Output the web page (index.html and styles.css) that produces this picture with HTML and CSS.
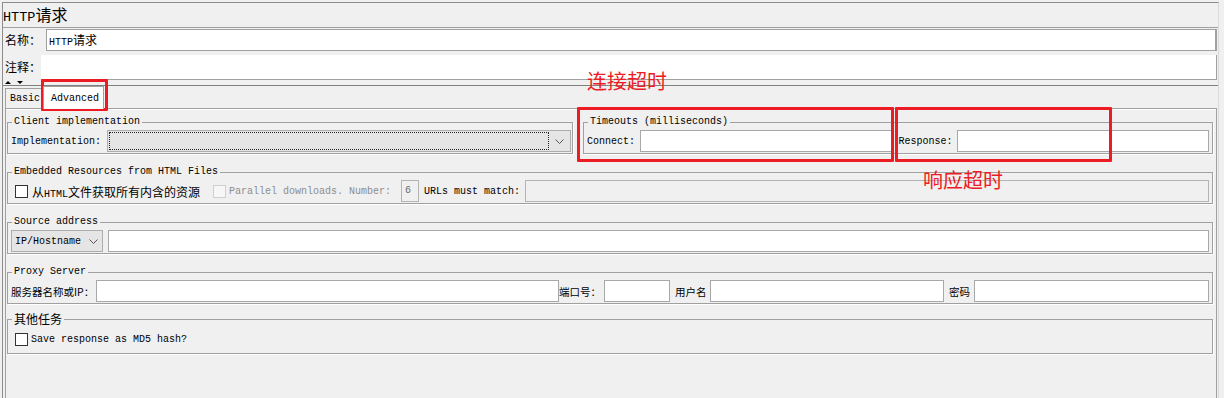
FILE: index.html
```html
<!DOCTYPE html>
<html lang="zh-CN">
<head>
  <meta charset="UTF-8" />
  <meta name="viewport" content="width=device-width, initial-scale=1.0"/>
  <title>HTTP请求 - Advanced</title>
  <link rel="stylesheet" href="styles.css">
</head>
<body>
  <div class="page">
    <div class="title"><span class="en">HTTP</span>请求</div>

    <div class="info">
      <div class="info-row">
        <label class="info-label name-label cn">名称：</label>
        <div class="name-field cn"><span class="en">HTTP</span>请求</div>
      </div>
      <div class="info-row">
        <label class="info-label comment-label cn">注释：</label>
        <div class="comment-area"></div>
      </div>
    </div>

    <div class="splitter">
      <svg width="20" height="5" viewBox="0 0 20 5">
        <polygon points="0,4 3,1 6,4" fill="#000"/>
        <polygon points="12,1 18,1 15,4" fill="#000"/>
      </svg>
    </div>

    <div class="tabs">
      <div class="tab">Basic</div>
      <div class="tab tab-active">Advanced</div>
    </div>

    <div class="tab-panel">
      <div class="row">
        <fieldset class="group group-client">
          <legend>Client implementation</legend>
          <div class="line">
            <span>Implementation:</span>
            <div class="combo combo-impl">
              <div class="focus"></div>
              <svg class="chevron" width="9" height="5" viewBox="0 0 9 5">
                <polyline points="0.5,0.5 4.5,4.5 8.5,0.5" fill="none" stroke="#555" stroke-width="1"/>
              </svg>
            </div>
          </div>
        </fieldset>

        <fieldset class="group group-timeouts">
          <legend>Timeouts (milliseconds)</legend>
          <div class="line">
            <span>Connect:</span>
            <input class="input timeout-input timeout-connect" type="text">
            <span class="response-label">Response:</span>
            <input class="input timeout-input timeout-response" type="text">
          </div>
        </fieldset>
      </div>

      <fieldset class="group">
        <legend>Embedded Resources from HTML Files</legend>
        <div class="line">
          <input class="check check-embedded" type="checkbox">
          <span class="check-text cn">从<span class="en">HTML</span>文件获取所有内含的资源</span>
          <input class="check check-disabled" type="checkbox" disabled>
          <span class="muted">Parallel downloads. Number:</span>
          <div class="num-box">6</div>
          <span class="urls-label">URLs must match:</span>
          <input class="input input-disabled urls-input" type="text" disabled>
        </div>
      </fieldset>

      <fieldset class="group">
        <legend>Source address</legend>
        <div class="line">
          <div class="combo combo-source">
            <span>IP/Hostname</span>
            <svg class="chevron" width="9" height="5" viewBox="0 0 9 5">
              <polyline points="0.5,0.5 4.5,4.5 8.5,0.5" fill="none" stroke="#555" stroke-width="1"/>
            </svg>
          </div>
          <input class="input source-input" type="text">
        </div>
      </fieldset>

      <fieldset class="group">
        <legend>Proxy Server</legend>
        <div class="line proxy-line">
          <span class="proxy-label lbl-host">服务器名称或IP：</span>
          <input class="input proxy-host" type="text">
          <span class="proxy-label lbl-port">端口号：</span>
          <input class="input proxy-port" type="text">
          <span class="proxy-label lbl-user">用户名</span>
          <input class="input proxy-user" type="text">
          <span class="proxy-label lbl-pwd">密码</span>
          <input class="input proxy-pwd" type="password">
        </div>
      </fieldset>

      <fieldset class="group group-other">
        <legend class="cn">其他任务</legend>
        <div class="line">
          <input class="check check-md5" type="checkbox">
          <span class="md5-text">Save response as MD5 hash?</span>
        </div>
      </fieldset>
    </div>
  </div>

  <!-- annotations drawn over the screenshot -->
  <div class="note note-connect">连接超时</div>
  <div class="note note-response">响应超时</div>
  <div class="mark mark-tab"></div>
  <div class="mark mark-connect"></div>
  <div class="mark mark-response"></div>
</body>
</html>
```

FILE: styles.css
```css
body {
  margin: 0;
  width: 1224px;
  height: 398px;
  overflow: hidden;
  position: relative;
  background: #f0f0f0;
  font-family: "Liberation Mono", "Noto Sans CJK SC", monospace;
  font-size: 10px;
  color: #000;
}
.cn {
  font-family: "Noto Sans CJK SC", sans-serif;
  font-size: 12px;
}
.en {
  font-family: "Liberation Mono", monospace;
  font-size: 10px;
}
.page {
  margin: 2px 0 0 2px;
  width: 1215px;
  height: 396px;
  border-top: 1px solid #8c8c8c;
  border-left: 1px solid #8c8c8c;
  border-right: 1px solid #dadada;
}
.title {
  height: 24px;
  line-height: 22px;
  font-family: "Noto Sans CJK SC", sans-serif;
  font-size: 16px;
}
.title .en {
  font-size: 13.5px;
}

/* name / comment */
.info {
  border-top: 1px solid #a0a0a0;
}
.info-row {
  display: flex;
  height: 26px;
  padding-right: 1px;
}
.info-label {
  padding-left: 2px;
  box-sizing: border-box;
}
.name-label {
  width: 43px;
  line-height: 22px;
  margin-top: 1px;
}
.comment-label {
  width: 38px;
  line-height: 26px;
}
.name-field {
  flex: 1;
  height: 22px;
  margin-top: 1px;
  box-sizing: border-box;
  border: 1px solid #a0a0a0;
  border-right: 2px solid #a0a0a0;
  background: #fff;
  padding-left: 2px;
  line-height: 20px;
}
.comment-area {
  flex: 1;
  height: 25px;
  margin-top: 1px;
  box-sizing: border-box;
  background: #fff;
  border-right: 1px solid #a0a0a0;
  border-bottom: 1px solid #a0a0a0;
}
.splitter {
  height: 5px;
  padding-left: 2px;
  border-bottom: 1px solid #808080;
}
.splitter svg {
  display: block;
}

/* tabs */
.tabs {
  display: flex;
  align-items: flex-end;
  height: 22px;
  padding-left: 2px;
}
.tab {
  height: 20px;
  box-sizing: border-box;
  border: 1px solid #a0a0a0;
  border-bottom: none;
  padding: 0 2px 0 4px;
  line-height: 20px;
}
.tab-active {
  height: 23px;
  margin-bottom: -1px;
  padding: 0 4px 0 7px;
  line-height: 23px;
  background: #fff;
  position: relative;
  z-index: 1;
}
.tab-panel {
  margin: 0 1px 0 2px;
  height: 300px;
  border: 1px solid #a0a0a0;
  border-bottom: none;
  box-shadow: inset 0 1px 0 #fff;
  padding: 7px 3px 0 1px;
}

/* groups */
.row {
  display: flex;
  gap: 10px;
}
.group {
  margin: 0 0 12px;
  min-width: 0;
  border: 1px solid #a0a0a0;
  box-shadow: 1px 1px 0 #fff;
  padding: 2px 3px 1px 3px;
}
.group legend {
  padding: 0 2px;
  margin-left: 1px;
  line-height: 12px;
}
.group-client {
  flex: 0 0 566px;
  box-sizing: border-box;
  padding-right: 1px;
}
.group-timeouts {
  flex: 1;
}
.group-other {
  margin-top: -3px;
  padding-top: 3px;
  padding-bottom: 3px;
}
.line {
  display: flex;
  align-items: center;
  height: 22px;
  white-space: nowrap;
}

/* controls */
.input {
  height: 22px;
  box-sizing: border-box;
  margin: 0;
  padding: 0 2px;
  border: 1px solid #a8a8a8;
  background: #fff;
  font: inherit;
  min-width: 0;
}
.input-disabled {
  background: #f0f0f0;
  border-color: #b4b4b4;
}
.combo {
  display: flex;
  align-items: center;
  height: 22px;
  box-sizing: border-box;
  border: 1px solid #adadad;
  background: #e5e5e5;
}
.chevron {
  display: block;
}
.combo-impl {
  width: 464px;
  margin-left: 6px;
  padding: 1px;
}
.combo-impl .focus {
  flex: 1;
  height: 18px;
  box-sizing: border-box;
  border: 1px dotted #222;
}
.combo-impl .chevron {
  margin: 0 5px 0 6px;
}
.combo-source {
  width: 92px;
  padding-left: 3px;
}
.combo-source .chevron {
  margin-left: 8px;
}
.timeout-input {
  flex: 1;
}
.timeout-connect {
  margin-left: 5px;
}
.response-label {
  margin-left: 6px;
}
.timeout-response {
  margin-left: 4px;
}
.check {
  appearance: none;
  margin: 0;
  width: 13px;
  height: 13px;
  box-sizing: border-box;
  border: 1px solid #333;
  background: #fff;
}
.check-embedded,
.check-md5 {
  margin-left: 4px;
}
.check-text {
  margin-left: 4px;
}
.check-disabled {
  margin-left: 13px;
  border-color: #cfcfcf;
  background: #f7f7f7;
}
.muted {
  margin-left: 3px;
  color: #8d8d8d;
}
.num-box {
  width: 18px;
  height: 22px;
  box-sizing: border-box;
  margin-left: 10px;
  padding-left: 3px;
  border: 1px solid #b4b4b4;
  line-height: 20px;
  color: #6d6d6d;
}
.urls-label {
  margin-left: 5px;
}
.urls-input {
  flex: 1;
  margin-left: 5px;
}
.source-input {
  flex: 1;
  margin-left: 5px;
}
.proxy-label {
  font-family: "Noto Sans CJK SC", sans-serif;
  font-size: 10.5px;
}
.lbl-host { width: 85px; }
.lbl-port { width: 45px; }
.lbl-user { width: 35px; margin-left: 5px; }
.lbl-pwd { width: 25px; margin-left: 5px; }
.proxy-host { width: 463px; }
.proxy-port { width: 66px; }
.proxy-user { width: 234px; }
.proxy-pwd { flex: 1; }
.md5-text {
  margin-left: 3px;
}

/* red annotations */
.mark {
  position: absolute;
  box-sizing: border-box;
  border: 3px solid #ed1c24;
  border-radius: 1px;
}
.mark-tab {
  left: 41px;
  top: 79px;
  width: 67px;
  height: 32px;
}
.mark-connect {
  left: 577px;
  top: 107px;
  width: 317px;
  height: 55px;
}
.mark-response {
  left: 895px;
  top: 107px;
  width: 217px;
  height: 55px;
}
.note {
  position: absolute;
  color: #ed1c24;
  font-family: "Noto Sans CJK SC", sans-serif;
  font-size: 20px;
  line-height: 20px;
}
.note-connect {
  left: 587px;
  top: 71px;
}
.note-response {
  left: 923px;
  top: 170px;
}
```
